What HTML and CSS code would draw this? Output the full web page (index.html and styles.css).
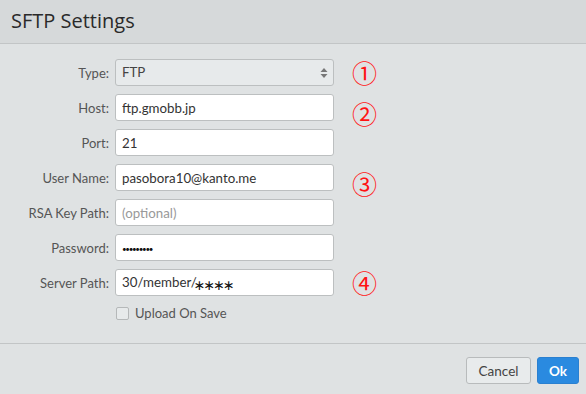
FILE: index.html
```html
<!DOCTYPE html>
<html lang="en">
  <head>
    <title>SFTP Settings</title>
    <meta charset="utf-8">
    <link rel="stylesheet" href="styles.css">
  </head>
  <body>

  <div class="dialog">
    <div class="dialog-header">SFTP Settings</div>

    <form class="dialog-body">
      <label class="label" for="type">Type:</label>
      <div class="select-wrap">
        <select id="type" class="field select">
          <option>FTP</option>
          <option>SFTP</option>
        </select>
        <svg class="select-arrows" width="8" height="12" viewBox="0 0 8 12">
          <path d="M4 1 L7.5 5 L0.5 5 Z" fill="#777"/>
          <path d="M4 11 L7.5 7 L0.5 7 Z" fill="#777"/>
        </svg>
      </div>
      <span class="mark">&#9312;</span>

      <label class="label" for="host">Host:</label>
      <input id="host" class="field" type="text" value="ftp.gmobb.jp">
      <span class="mark mark-low">&#9313;</span>

      <label class="label" for="port">Port:</label>
      <input id="port" class="field" type="text" value="21">
      <span></span>

      <label class="label" for="user">User Name:</label>
      <input id="user" class="field" type="text" value="pasobora10@kanto.me">
      <span class="mark mark-low">&#9314;</span>

      <label class="label" for="rsa">RSA Key Path:</label>
      <input id="rsa" class="field" type="text" placeholder="(optional)">
      <span></span>

      <label class="label" for="pass">Password:</label>
      <div id="pass" class="field fake"><span class="dots">&bull;&bull;&bull;&bull;&bull;&bull;&bull;&bull;&bull;</span></div>
      <span></span>

      <label class="label" for="path">Server Path:</label>
      <div id="path" class="field fake">30/member/<span class="masked">&lowast;&lowast;&lowast;&lowast;</span></div>
      <span class="mark">&#9315;</span>

      <span></span>
      <label class="check">
        <span class="box"></span>
        Upload On Save
      </label>
      <span></span>
    </form>

    <div class="dialog-footer">
      <button class="btn" type="button">Cancel</button>
      <button class="btn btn-primary" type="button">Ok</button>
    </div>
  </div>

  </body>
</html>
```

FILE: styles.css
```css
html, body {
  height: 100%;
}
body {
  margin: 0;
  padding: 0;
  background: #dfe2e3;
  color: #333;
  font-family: "Source Sans Pro", Lato, "Liberation Sans", sans-serif;
  font-size: 13px;
}

.dialog {
  width: 586px;
}

.dialog-header {
  height: 43px;
  line-height: 42px;
  padding-left: 11px;
  font-family: "Open Sans", Lato, sans-serif;
  font-size: 20px;
  color: #2a2a2a;
  background: #d6d9da;
  border-bottom: 1px solid #c2c5c6;
}

.dialog-body {
  display: grid;
  grid-template-columns: 109px 219px 24px;
  column-gap: 6px;
  row-gap: 8px;
  align-items: center;
  padding: 15px 0 20px 0;
  border-bottom: 1px solid #c2c5c6;
}

.label {
  text-align: right;
  color: #555;
}

.field {
  box-sizing: border-box;
  width: 219px;
  height: 27px;
  margin: 0;
  padding: 0 6px;
  border: 1px solid #bcbfc0;
  border-radius: 3px;
  background: #fff;
  color: #333;
  font: inherit;
  font-size: 13.3px;
  line-height: 25px;
  outline: none;
}
.field::placeholder {
  color: #999;
}

.select-wrap {
  position: relative;
  height: 27px;
}
.select {
  -webkit-appearance: none;
  appearance: none;
  background: #e7eaeb;
  color: #444;
}
.select-arrows {
  position: absolute;
  right: 6px;
  top: 8px;
  pointer-events: none;
}

.dots {
  font-size: 8px;
  letter-spacing: -1.3px;
  color: #111;
}
.masked {
  display: inline-block;
  margin-left: -3px;
  font-family: "DejaVu Sans", sans-serif;
  font-size: 14px;
  letter-spacing: -2px;
  color: #111;
  vertical-align: -3px;
}

.mark {
  margin-left: 12px;
  font-family: "Noto Sans CJK JP", sans-serif;
  font-size: 25px;
  line-height: 27px;
  color: #ff1414;
}
.mark-low {
  position: relative;
  top: 6px;
}

.check {
  display: flex;
  align-items: center;
  gap: 6px;
  height: 20px;
  color: #555;
  margin-top: -1px;
}
.box {
  box-sizing: border-box;
  width: 13px;
  height: 13px;
  margin-left: 1px;
  border: 1px solid #b5b8b9;
  border-radius: 2px;
  background: #e7eaeb;
}

.dialog-footer {
  display: flex;
  justify-content: flex-end;
  gap: 6px;
  padding: 13px 7px 0 0;
}

.btn {
  height: 27px;
  width: 65px;
  padding: 0;
  border: 1px solid #b8bbbc;
  border-radius: 3px;
  background: #e8ebec;
  color: #444;
  font: inherit;
  font-size: 13.5px;
}
.btn-primary {
  width: 42px;
  background: #2a8ae0;
  border-color: #2a80d0;
  color: #fff;
  font-weight: bold;
}
```
